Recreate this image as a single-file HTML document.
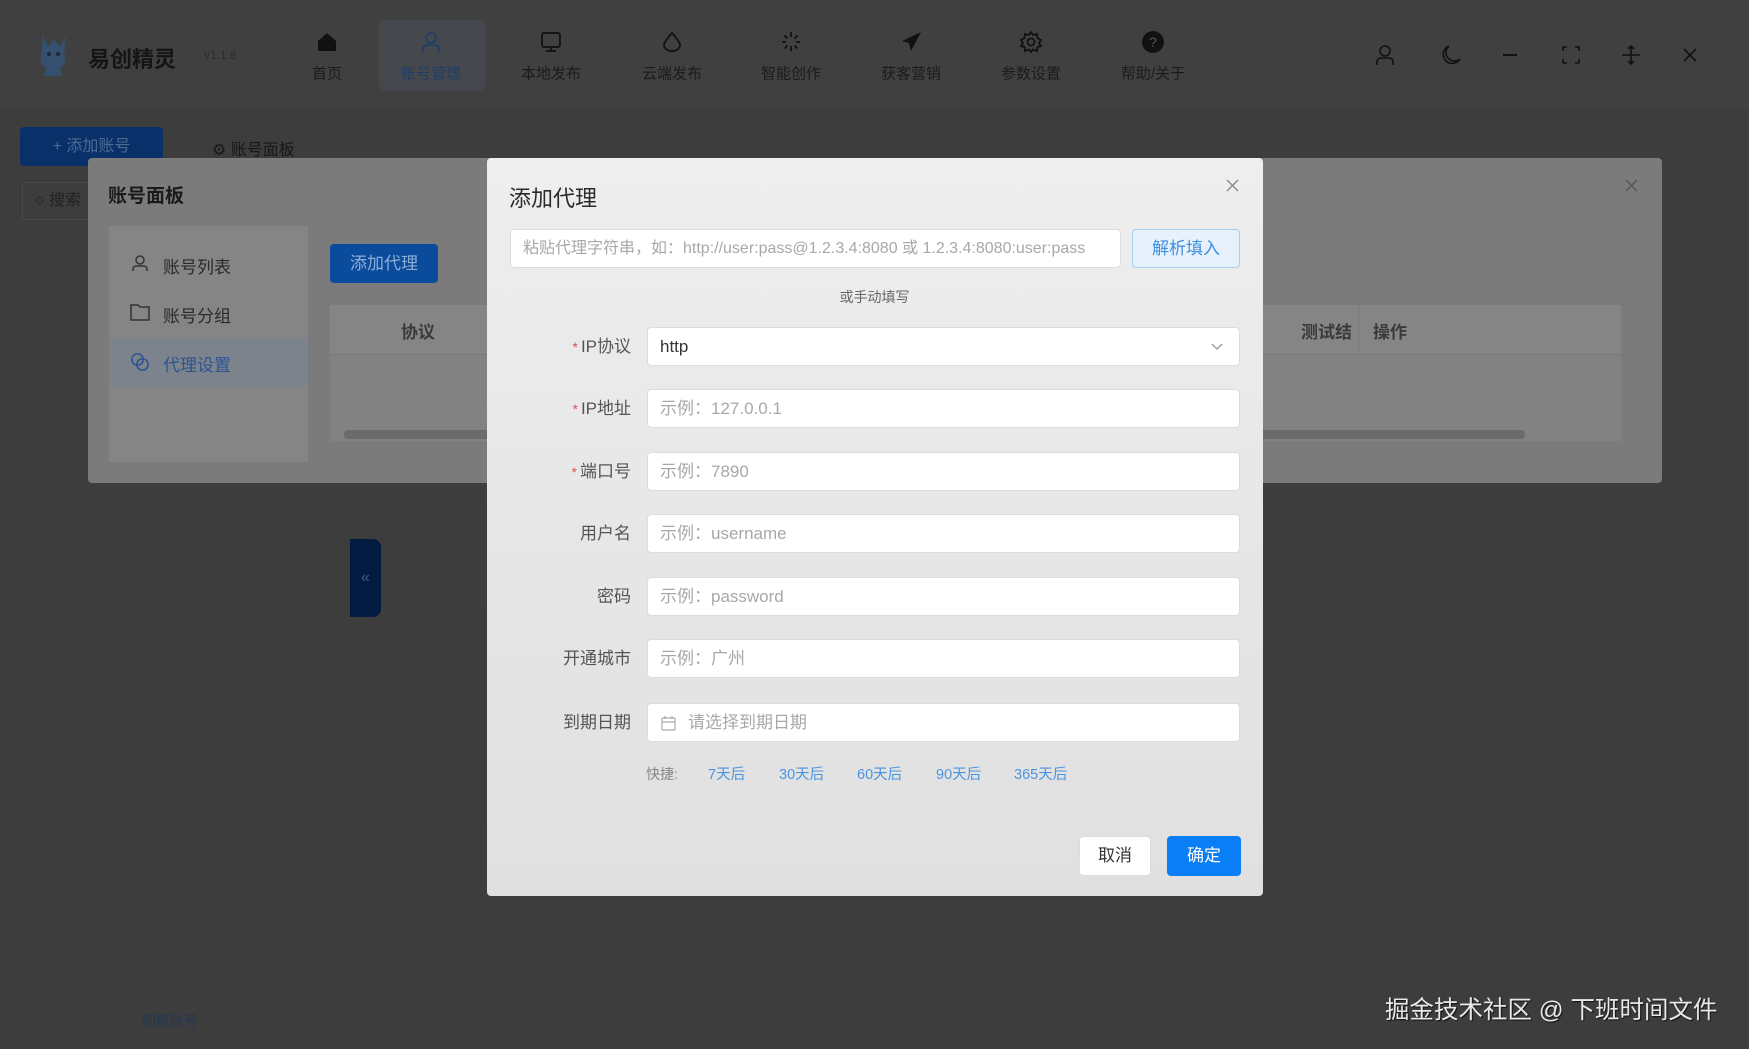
<!DOCTYPE html>
<html><head><meta charset="utf-8"><style>
*{margin:0;padding:0;box-sizing:border-box}
body{width:1749px;height:1049px;overflow:hidden;background:#3d3d3d;font-family:"Liberation Sans","Noto Sans CJK SC",sans-serif;position:relative;color:#222}
.a{position:absolute}
.nav{position:absolute;top:20px;width:106px;height:71px;text-align:center;color:#1b1b1b;font-size:15px}
.nav svg{position:absolute;left:41px;top:10px}
.nav span{position:absolute;left:0;right:0;top:53px;transform:translateY(-50%)}
.inp{position:absolute;left:647px;width:593px;height:39px;background:#fff;border-radius:4px;border:1px solid #dcdcdc;font-size:17px;color:#a8a8a8;line-height:37px;padding-left:12px}
.lbl{position:absolute;right:1118px;font-size:17px;color:#555;line-height:39px;white-space:nowrap}
.lbl i{color:#e05050;font-style:normal;font-size:14px;margin-right:3px}
.ql{position:absolute;top:763px;font-size:14.5px;color:#4a95e0}
</style></head><body>
<div class="a" style="left:0;top:0;width:1749px;height:109px;background:#404040"></div>
<svg class="a" style="left:36px;top:32px" width="34" height="46" viewBox="0 0 34 46"><path d="M6 4 L12 14 L18 8 L24 14 L30 4 L28 20 Q32 30 24 36 L26 44 L8 44 L10 36 Q2 30 6 20 Z" fill="#34506e"/><circle cx="13" cy="22" r="2" fill="#1a2a3a"/><circle cx="22" cy="22" r="2" fill="#1a2a3a"/></svg>
<div class="a" style="left:88px;top:42px;font-size:22px;font-weight:bold;color:#151515">易创精灵</div>
<div class="a" style="left:204px;top:48px;font-size:12px;color:#2e2e2e">v1.1.8</div>
<div class="a" style="left:379px;top:20px;width:106px;height:71px;background:#45484d;border-radius:6px"></div>
<div class="nav" style="left:274px"><svg width="24" height="24" viewBox="0 0 24 24"><path d="M3 11 L12 3 L21 11 V21 H3 Z" fill="#111"/></svg><span>首页</span></div>
<div class="nav" style="left:378px;color:#1f3f66"><svg width="24" height="24" viewBox="0 0 24 24" fill="none" stroke="#1f3f66" stroke-width="1.8"><circle cx="12" cy="8" r="5"/><path d="M4 22 V19 Q4 15 9 15 H15 Q20 15 20 19 V22"/></svg><span>账号管理</span></div>
<div class="nav" style="left:498px"><svg width="24" height="24" viewBox="0 0 24 24" fill="none" stroke="#111" stroke-width="1.8"><rect x="3" y="3" width="18" height="14" rx="2"/><path d="M12 17 V21 M7 21 H17"/></svg><span>本地发布</span></div>
<div class="nav" style="left:619px"><svg width="24" height="24" viewBox="0 0 24 24" fill="none" stroke="#111" stroke-width="1.8"><path d="M12 3 Q20 12 20 15 A8 6 0 0 1 4 15 Q4 12 12 3Z"/></svg><span>云端发布</span></div>
<div class="nav" style="left:738px"><svg width="24" height="24" viewBox="0 0 24 24" stroke="#111" stroke-width="1.8"><path d="M12 2V7M12 16V21M3 12H7M17 12H21M5.5 5.5L8.5 8.5M15.5 15.5L18.5 18.5M18.5 5.5L15.5 8.5M8.5 15.5L5.5 18.5"/></svg><span>智能创作</span></div>
<div class="nav" style="left:858px"><svg width="24" height="24" viewBox="0 0 24 24"><path d="M22 2 L3 11 L10 13 L12 21 Z" fill="#111"/></svg><span>获客营销</span></div>
<div class="nav" style="left:978px"><svg width="24" height="24" viewBox="0 0 24 24" fill="none" stroke="#111" stroke-width="1.8"><circle cx="12" cy="12" r="3.5"/><path d="M12 2 L14 5 L18 4 L18.5 8 L22 10 L20 13 L22 16 L18.5 17 L18 21 L14 19.5 L12 22 L10 19.5 L6 21 L5.5 17 L2 16 L4 13 L2 10 L5.5 8 L6 4 L10 5 Z"/></svg><span>参数设置</span></div>
<div class="nav" style="left:1100px"><svg width="24" height="24" viewBox="0 0 24 24"><circle cx="12" cy="12" r="11" fill="#111"/><text x="12" y="17" font-size="14" fill="#555" text-anchor="middle" font-family="Liberation Sans">?</text></svg><span>帮助/关于</span></div>
<svg class="a" style="left:1374px;top:44px" width="22" height="22" viewBox="0 0 22 22" fill="none" stroke="#111" stroke-width="1.6"><circle cx="11" cy="7" r="5"/><path d="M3 21V18Q3 14 8 14H14Q19 14 19 18V21"/></svg>
<svg class="a" style="left:1440px;top:44px" width="22" height="22" viewBox="0 0 22 22" fill="none" stroke="#111" stroke-width="1.6"><path d="M9 2 A9 9 0 1 0 20 15 A8 8 0 0 1 9 2Z"/></svg>
<div class="a" style="left:1503px;top:54px;width:14px;height:2px;background:#111"></div>
<svg class="a" style="left:1562px;top:46px" width="18" height="18" viewBox="0 0 18 18" fill="none" stroke="#111" stroke-width="1.6"><path d="M1 5V1H5M13 1H17V5M17 13V17H13M5 17H1V13"/></svg>
<svg class="a" style="left:1621px;top:45px" width="20" height="20" viewBox="0 0 20 20" fill="none" stroke="#111" stroke-width="1.6"><path d="M10 1V19M1 10H19M7 4L10 1L13 4M7 16L10 19L13 16"/></svg>
<svg class="a" style="left:1683px;top:48px" width="14" height="14" viewBox="0 0 14 14" stroke="#111" stroke-width="1.6"><path d="M1 1L13 13M13 1L1 13"/></svg>
<div class="a" style="left:20px;top:127px;width:143px;height:39px;background:#0a306a;border-radius:4px;color:#4d6b93;font-size:16px;line-height:39px;text-align:center">+ 添加账号</div>
<div class="a" style="left:212px;top:136px;font-size:16px;color:#181818">⚙ 账号面板</div>
<div class="a" style="left:22px;top:182px;width:100px;height:38px;border:1px solid #4a4a4a;border-radius:4px;color:#222;font-size:16px;line-height:36px;padding-left:12px">○ 搜索</div>
<div class="a" style="left:88px;top:158px;width:1574px;height:325px;background:#7b7b7b;border-radius:4px"></div>
<div class="a" style="left:108px;top:181px;font-size:19px;font-weight:bold;color:#1a1a1a">账号面板</div>
<svg class="a" style="left:1625px;top:179px" width="13" height="13" viewBox="0 0 13 13" stroke="#555" stroke-width="1.4"><path d="M1 1L12 12M12 1L1 12"/></svg>
<div class="a" style="left:109px;top:226px;width:199px;height:236px;background:#858585"></div>
<div class="a" style="left:109px;top:338px;width:199px;height:48px;background:#7c838d"></div>
<svg class="a" style="left:131px;top:254px" width="18" height="18" viewBox="0 0 18 18" fill="none" stroke="#333" stroke-width="1.5"><circle cx="9" cy="6" r="4"/><path d="M2 17V15Q2 12 6 12H12Q16 12 16 15V17"/></svg>
<div class="a" style="left:163px;top:253px;font-size:17px;color:#2a2a2a">账号列表</div>
<svg class="a" style="left:130px;top:303px" width="20" height="18" viewBox="0 0 20 18" fill="none" stroke="#333" stroke-width="1.5"><path d="M1 2H8L10 4H19V17H1Z"/></svg>
<div class="a" style="left:163px;top:302px;font-size:17px;color:#2a2a2a">账号分组</div>
<svg class="a" style="left:130px;top:352px" width="20" height="20" viewBox="0 0 20 20" fill="none" stroke="#2a5590" stroke-width="1.6"><rect x="2" y="2" width="11" height="11" rx="5"/><rect x="7" y="7" width="11" height="11" rx="5"/></svg>
<div class="a" style="left:163px;top:351px;font-size:17px;color:#2a5590">代理设置</div>
<div class="a" style="left:330px;top:244px;width:108px;height:39px;background:#0a4b9c;border-radius:4px;color:#8faed6;font-size:17px;line-height:39px;text-align:center">添加代理</div>
<div class="a" style="left:330px;top:305px;width:1291px;height:136px;background:#828282"></div>
<div class="a" style="left:330px;top:305px;width:1291px;height:50px;background:#858585;border-bottom:1px solid #777"></div>
<div class="a" style="left:401px;top:318px;font-size:17px;font-weight:bold;color:#3a3a3a">协议</div>
<div class="a" style="left:1301px;top:318px;font-size:17px;font-weight:bold;color:#3a3a3a">测试结</div>
<div class="a" style="left:1358px;top:305px;width:1px;height:50px;background:#7a7a7a"></div>
<div class="a" style="left:1373px;top:318px;font-size:17px;font-weight:bold;color:#3a3a3a">操作</div>
<div class="a" style="left:344px;top:430px;width:1181px;height:9px;background:#6b6b6b;border-radius:4px"></div>
<div class="a" style="left:350px;top:539px;width:31px;height:78px;background:#021b40;border-radius:0 8px 8px 0;color:#3c5a80;font-size:16px;line-height:78px;text-align:center">«</div>
<div class="a" style="left:142px;top:1011px;font-size:14px;color:#1f3856">刷新账号</div>
<div class="a" style="left:487px;top:158px;width:776px;height:738px;background:linear-gradient(#eeeeee,#e0e0e0);border-radius:4px"></div>
<div class="a" style="left:509px;top:181px;font-size:22px;color:#2b2b2b">添加代理</div>
<svg class="a" style="left:1226px;top:179px" width="13" height="13" viewBox="0 0 13 13" stroke="#888" stroke-width="1.4"><path d="M1 1L12 12M12 1L1 12"/></svg>
<div class="inp" style="left:510px;top:229px;width:611px;font-size:16px;overflow:hidden;white-space:nowrap">粘贴代理字符串，如：http://user:pass@1.2.3.4:8080 或 1.2.3.4:8080:user:pass</div>
<div class="a" style="left:1132px;top:229px;width:108px;height:39px;background:#e6f1fc;border:1px solid #a7cdf2;border-radius:4px;color:#3d8fe0;font-size:17px;line-height:37px;text-align:center">解析填入</div>
<div class="a" style="left:0;width:1749px;text-align:center;top:287px;font-size:14px;color:#666">或手动填写</div>
<div class="lbl" style="top:327px"><i>*</i>IP协议</div>
<div class="inp" style="top:327px;color:#333">http<svg style="position:absolute;right:16px;top:15px" width="12" height="8" viewBox="0 0 12 8" fill="none" stroke="#999" stroke-width="1.3"><path d="M1 1L6 6L11 1"/></svg></div>
<div class="lbl" style="top:389px"><i>*</i>IP地址</div>
<div class="inp" style="top:389px">示例：127.0.0.1</div>
<div class="lbl" style="top:452px"><i>*</i>端口号</div>
<div class="inp" style="top:452px">示例：7890</div>
<div class="lbl" style="top:514px">用户名</div>
<div class="inp" style="top:514px">示例：username</div>
<div class="lbl" style="top:577px">密码</div>
<div class="inp" style="top:577px">示例：password</div>
<div class="lbl" style="top:639px">开通城市</div>
<div class="inp" style="top:639px">示例：广州</div>
<div class="lbl" style="top:703px">到期日期</div>
<div class="inp" style="top:703px;padding-left:40px"><svg style="position:absolute;left:13px;top:12px" width="15" height="15" viewBox="0 0 15 15" fill="none" stroke="#aaa" stroke-width="1.2"><rect x="1" y="2" width="13" height="12" rx="1"/><path d="M1 6H14M4 0V3M11 0V3"/></svg>请选择到期日期</div>
<div class="a" style="left:646px;top:764px;font-size:14px;color:#888">快捷:</div>
<div class="ql" style="left:708px">7天后</div>
<div class="ql" style="left:779px">30天后</div>
<div class="ql" style="left:857px">60天后</div>
<div class="ql" style="left:936px">90天后</div>
<div class="ql" style="left:1014px">365天后</div>
<div class="a" style="left:1079px;top:836px;width:72px;height:40px;background:#fff;border:1px solid #ddd;border-radius:4px;font-size:17px;color:#333;line-height:38px;text-align:center">取消</div>
<div class="a" style="left:1167px;top:836px;width:74px;height:40px;background:#0a7ef5;border-radius:4px;font-size:17px;color:#fff;line-height:40px;text-align:center">确定</div>
<div class="a" style="left:1385px;top:991px;font-size:24.5px;color:#e8e8e8;text-shadow:1px 1px 1px #111;white-space:nowrap">掘金技术社区 @ 下班时间文件</div>
</body></html>
